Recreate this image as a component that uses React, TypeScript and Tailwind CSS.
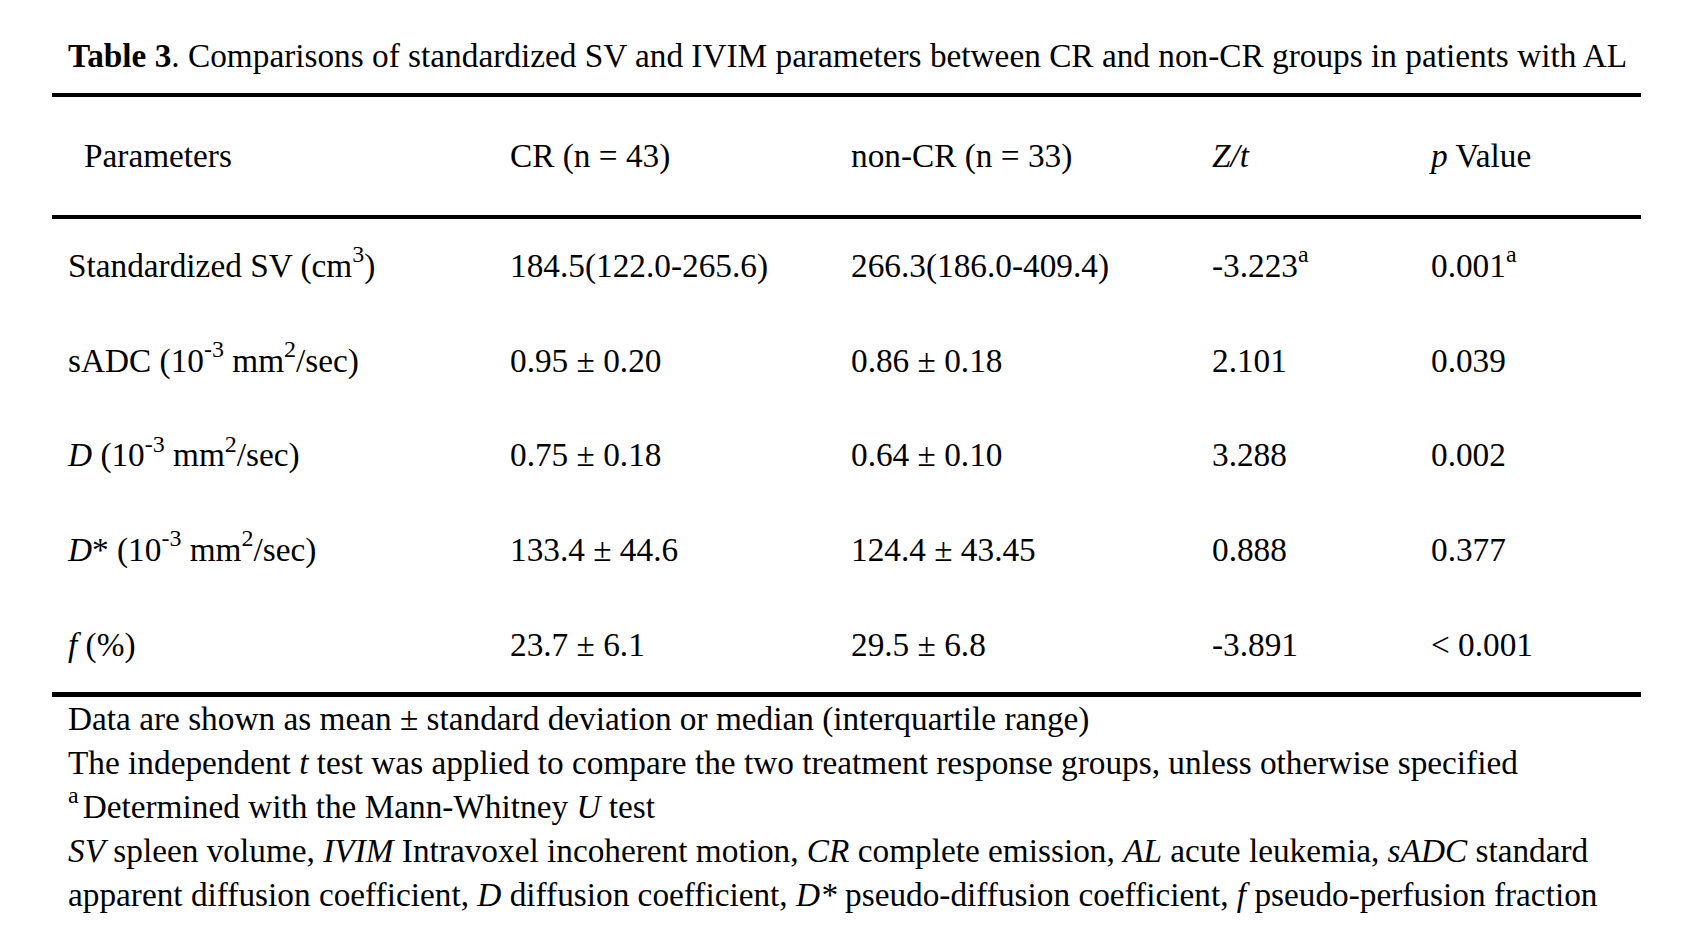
import React from 'react';

type Row = {
  label: React.ReactNode;
  cr: React.ReactNode;
  nonCr: React.ReactNode;
  stat: React.ReactNode;
  p: React.ReactNode;
};

const Sup = ({ children }: { children: React.ReactNode }) => (
  <sup className="text-[0.72em] top-[-0.62em]">{children}</sup>
);

const Unit = () => (
  <>
    (10<Sup>-3</Sup> mm<Sup>2</Sup>/sec)
  </>
);

const rows: Row[] = [
  {
    label: (
      <>
        Standardized SV (cm<Sup>3</Sup>)
      </>
    ),
    cr: '184.5(122.0-265.6)',
    nonCr: '266.3(186.0-409.4)',
    stat: (
      <>
        -3.223<Sup>a</Sup>
      </>
    ),
    p: (
      <>
        0.001<Sup>a</Sup>
      </>
    ),
  },
  {
    label: (
      <>
        sADC <Unit />
      </>
    ),
    cr: '0.95 ± 0.20',
    nonCr: '0.86 ± 0.18',
    stat: '2.101',
    p: '0.039',
  },
  {
    label: (
      <>
        <i>D</i> <Unit />
      </>
    ),
    cr: '0.75 ± 0.18',
    nonCr: '0.64 ± 0.10',
    stat: '3.288',
    p: '0.002',
  },
  {
    label: (
      <>
        <i>D</i>* <Unit />
      </>
    ),
    cr: '133.4 ± 44.6',
    nonCr: '124.4 ± 43.45',
    stat: '0.888',
    p: '0.377',
  },
  {
    label: (
      <>
        <i>f</i> (%)
      </>
    ),
    cr: '23.7 ± 6.1',
    nonCr: '29.5 ± 6.8',
    stat: '-3.891',
    p: '< 0.001',
  },
];

const cols = 'grid grid-cols-[458px_341px_361px_219px_1fr] items-center';

export default function App() {
  return (
    <div className="w-[1689px] h-[935px] overflow-hidden bg-white text-black font-['Liberation_Serif','Times_New_Roman',serif] text-[33.3px] leading-[44px]">
      <div className="pt-[34px] pl-[68px]">
        <p className="whitespace-nowrap">
          <b>Table 3</b>. Comparisons of standardized SV and IVIM parameters between CR and non-CR groups in patients with AL
        </p>
      </div>

      <div className="ml-[52px] w-[1589px] mt-[15px]">
        <div className="h-[4px] bg-black" />

        {/* header */}
        <div className={`${cols} h-[118px]`}>
          <div className="pl-[32px]">Parameters</div>
          <div>CR (n = 43)</div>
          <div>non-CR (n = 33)</div>
          <div>
            <i>Z/t</i>
          </div>
          <div>
            <i>p</i> Value
          </div>
        </div>

        <div className="h-[4px] bg-black" />

        {/* body */}
        <div className="h-[473px] grid grid-rows-5">
          {rows.map((r, i) => (
            <div key={i} className={cols}>
              <div className="pl-[16px] whitespace-nowrap">{r.label}</div>
              <div>{r.cr}</div>
              <div>{r.nonCr}</div>
              <div>{r.stat}</div>
              <div>{r.p}</div>
            </div>
          ))}
        </div>

        <div className="h-[5px] bg-black" />
      </div>

      {/* footnotes */}
      <div className="pl-[68px] whitespace-nowrap">
        <p>Data are shown as mean ± standard deviation or median (interquartile range)</p>
        <p>
          The independent <i>t</i> test was applied to compare the two treatment response groups, unless otherwise specified
        </p>
        <p>
          <Sup>a</Sup>
          <span className="ml-[4px]">Determined with the Mann-Whitney <i>U</i> test</span>
        </p>
        <p>
          <i>SV</i> spleen volume, <i>IVIM</i> Intravoxel incoherent motion, <i>CR</i> complete emission, <i>AL</i> acute
          leukemia, <i>sADC</i> standard
        </p>
        <p>
          apparent diffusion coefficient, <i>D</i> diffusion coefficient, <i>D*</i> pseudo-diffusion coefficient, <i>f</i>{' '}
          pseudo-perfusion fraction
        </p>
      </div>
    </div>
  );
}
